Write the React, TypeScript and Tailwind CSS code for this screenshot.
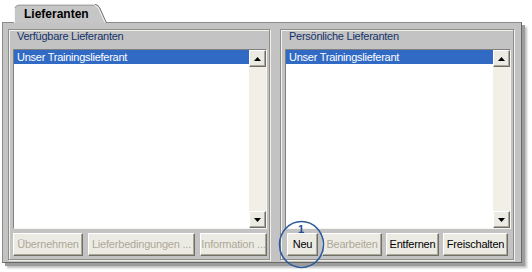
import React from 'react'

const btn =
  'h-[23px] flex items-center justify-center bg-[#ecebe3] border border-t-white border-l-white border-r-[#716f64] border-b-[#716f64] shadow-[inset_-1px_-1px_0_#aca899] text-[11px] tracking-[-0.2px] leading-none'

function Arrow({ up }: { up?: boolean }) {
  return (
    <div className="w-[17px] h-[17px] flex items-center justify-center bg-[#ecebe3] border border-t-white border-l-white border-r-[#6d6d6d] border-b-[#6d6d6d] shadow-[inset_-1px_-1px_0_#aca899]">
      <svg width="7" height="4" viewBox="0 0 7 4">
        {up ? <path d="M3.5 0 L7 4 L0 4 Z" fill="#000" /> : <path d="M0 0 L7 0 L3.5 4 Z" fill="#000" />}
      </svg>
    </div>
  )
}

function ListBox({ item }: { item: string }) {
  return (
    <div className="h-[180px] flex bg-white border border-t-[#808080] border-l-[#808080] border-r-[#f6f5ee] border-b-[#f6f5ee]">
      <div className="flex-1">
        <div className="h-[14px] bg-[#316ac5] text-white pl-[3px] leading-[14px] tracking-[-0.25px]">{item}</div>
      </div>
      <div className="w-[17px] flex flex-col bg-[#f2f0e6]">
        <Arrow up />
        <div className="flex-1" />
        <Arrow />
      </div>
    </div>
  )
}

function Group({ title, width, children }: { title: string; width: string; children: React.ReactNode }) {
  return (
    <div
      className={`${width} h-[231px] flex flex-col pl-[4px] pr-[2px] pb-[3px] border border-[#8e8e8e] shadow-[inset_1px_1px_0_#f3f1e6,1px_1px_0_#f3f1e6]`}
    >
      <div className="h-[13px] leading-[13px] pl-[4px] text-[#14336b] tracking-[-0.25px]">{title}</div>
      <div className="mt-[6px]">
        <ListBox item="Unser Trainingslieferant" />
      </div>
      {children}
    </div>
  )
}

export default function App() {
  return (
    <div className="relative w-[532px] h-[272px] bg-white overflow-hidden font-['Liberation_Sans',Arial,sans-serif] text-[11px] text-black">
      {/* tab strip */}
      <div className="h-[22px] pl-[14px] pt-[4px] flex">
        <div className="relative z-10 w-[93px] h-[19px] pl-[10px] pt-[4px] font-bold text-[12px] leading-[13px]">
          <svg className="absolute inset-0" width="93" height="19" viewBox="0 0 93 19">
            <path d="M0.5 19 V5 Q0.5 0.5 5 0.5 H81 Q84 0.5 85.5 3.5 L92.5 19 Z" fill="#c6c6c6" />
            <path d="M0.5 19 V5 Q0.5 0.5 5 0.5 H81" fill="none" stroke="#f4f4f4" />
            <path d="M1 4 Q2 1.5 5 1.2 H81" fill="none" stroke="#9a9a9a" />
            <path d="M81 0.5 Q84 0.5 85.5 3.5 L92.5 19" fill="none" stroke="#6f6f6f" />
            <path d="M80.5 1.5 Q83 1.8 84.5 4.5 L91 18.5" fill="none" stroke="#f4f4f4" />
          </svg>
          <span className="relative">Lieferanten</span>
        </div>
      </div>

      {/* panel */}
      <div className="ml-[2px] w-[520px] h-[241px] bg-[#c3c3c3] border border-t-[#8a8a8a] border-l-[#8a8a8a] border-r-[#6a6a6a] border-b-[#6a6a6a] shadow-[3px_3px_0_#9c9c9c,5px_5px_2px_rgba(0,0,0,0.25)] flex justify-between pl-[5px] pr-[7px] pt-[6px]">
        <Group title="Verfügbare Lieferanten" width="w-[262px]">
          <div className="mt-[4px] flex gap-[5px] text-[#aca899]">
            <div className={`${btn} w-[70px]`}>Übernehmen</div>
            <div className={`${btn} w-[107px]`}>Lieferbedingungen ...</div>
            <div className={`${btn} w-[67px]`}>Information ...</div>
          </div>
        </Group>
        <Group title="Persönliche Lieferanten" width="w-[234px]">
          <div className="mt-[4px] ml-[2px] flex gap-[4px]">
            <div className={`${btn} w-[31px]`}>Neu</div>
            <div className={`${btn} w-[60px] text-[#aca899]`}>Bearbeiten</div>
            <div className={`${btn} w-[53px]`}>Entfernen</div>
            <div className={`${btn} w-[65px]`}>Freischalten</div>
          </div>
        </Group>
      </div>

      {/* callout */}
      <svg className="absolute left-[278px] top-[220px]" width="47" height="50" viewBox="0 0 47 50">
        <ellipse cx="23.5" cy="24.5" rx="22" ry="23" fill="none" stroke="#2d5a9c" strokeWidth="1.6" />
      </svg>
      <span className="absolute left-[298px] top-[223px] text-[11px] leading-[12px] font-bold text-[#1d4f9a]">1</span>
    </div>
  )
}
